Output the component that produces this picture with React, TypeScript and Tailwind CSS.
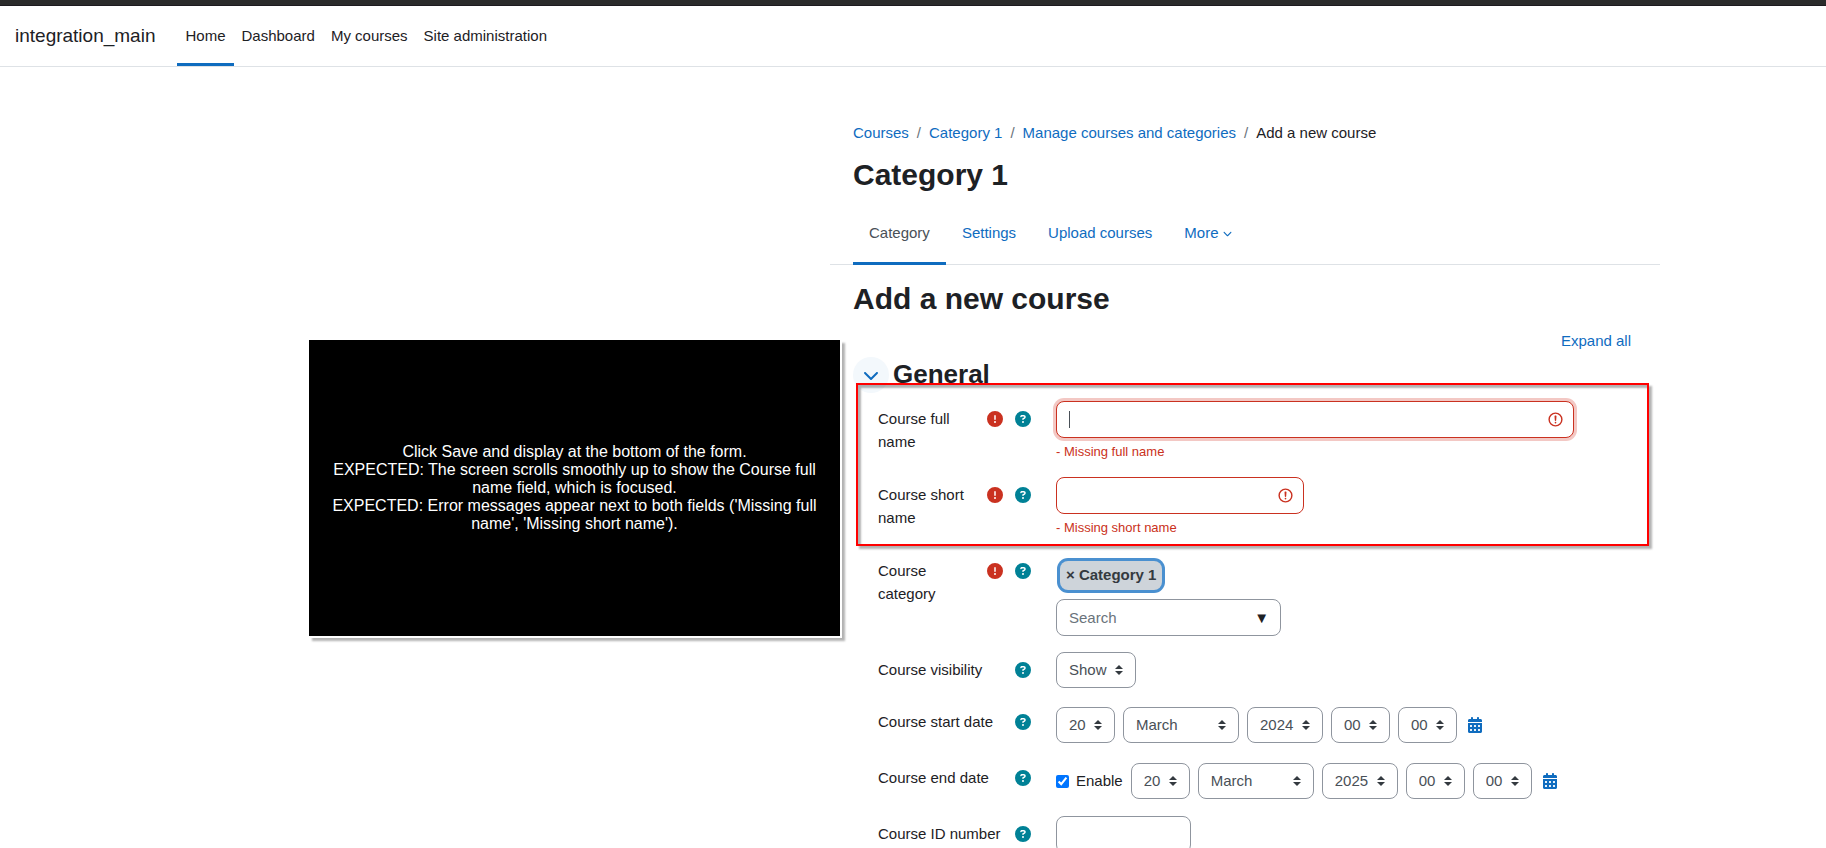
import React, { FC, ReactNode } from "react"
import { FaCalendarDays, FaChevronDown, FaCircleExclamation, FaCircleQuestion } from "react-icons/fa6"

const navItems = ["Home", "Dashboard", "My courses", "Site administration"]
const crumbs = ["Courses", "Category 1", "Manage courses and categories"]
const tabs = ["Category", "Settings", "Upload courses"]

const InvalidIcon = () => (
    <svg viewBox="0 0 12 12" fill="none" stroke="#ca3120" className="pointer-events-none absolute right-[10px] top-[10px] size-[17px]">
        <circle cx="6" cy="6" r="4.5" />
        <path strokeLinejoin="round" d="M5.8 3.6h.4L6 6.5z" />
        <circle cx="6" cy="8.2" r=".6" fill="#ca3120" stroke="none" />
    </svg>
)

interface RowProps {
    label: string
    htmlFor: string
    required?: boolean
    className?: string
    children: ReactNode
}

const Row: FC<RowProps> = ({ label, htmlFor, required, className, children }) => (
    <div className={`grid grid-cols-[153px_minmax(0,1fr)] gap-x-[25px] ${className || ""}`}>
        <div className="flex items-start justify-between pt-[6px]">
            <label htmlFor={htmlFor} className="leading-[23px]">{label}</label>
            <div className="flex h-[23px] shrink-0 items-center gap-3">
                {required && <FaCircleExclamation className="size-4 text-[#ca3120]" />}
                <button type="button" aria-label={`Help with ${label}`} className="text-[#008196]">
                    <FaCircleQuestion className="size-4" />
                </button>
            </div>
        </div>
        <div>{children}</div>
    </div>
)

interface SelectProps {
    id: string
    label?: string
    value: string
    width: string
}

const Select: FC<SelectProps> = ({ id, label, value, width }) => (
    <div className={`relative shrink-0 ${width}`}>
        <select
            id={id}
            aria-label={label}
            className="block h-9 w-full appearance-none rounded-lg border border-[#8f959e] bg-white pl-3 text-[15px] text-[#495057]"
        >
            <option>{value}</option>
        </select>
        <svg viewBox="0 0 4 5" fill="#343a40" className="pointer-events-none absolute right-[13px] top-[13px] h-[10px] w-2">
            <path d="M2 0L0 2h4zm0 5L0 3h4z" />
        </svg>
    </div>
)

const DateSelects: FC<{ id: string; year: string }> = ({ id, year }) => (
    <>
        <Select id={id} label="Day" value="20" width="w-[59px]" />
        <Select id={`${id}-month`} label="Month" value="March" width="w-[116px]" />
        <Select id={`${id}-year`} label="Year" value={year} width="w-[76px]" />
        <Select id={`${id}-hour`} label="Hour" value="00" width="w-[59px]" />
        <Select id={`${id}-minute`} label="Minute" value="00" width="w-[59px]" />
        <button type="button" aria-label="Calendar" className="ml-[3px] text-[#0f6cbf]">
            <FaCalendarDays className="h-4 w-[14px]" />
        </button>
    </>
)

const Header = () => (
    <header>
        <div className="h-[6px] border-b border-[#1d1a1f] bg-[#2b2b2b]" />
        <nav className="flex h-[61px] border-b border-[#dee2e6] pl-[15px]">
            <a href="#" className="mr-[22px] flex items-center text-[19px]">integration_main</a>
            {navItems.map((item) => (
                <a
                    key={item}
                    href="#"
                    className={`flex items-center border-y-[3px] border-t-transparent px-2 ${item === "Home" ? "border-b-[#0f6cbf]" : "border-b-transparent"}`}
                >
                    {item}
                </a>
            ))}
        </nav>
    </header>
)

const Note = () => (
    <aside className="-mr-[12px] ml-auto mt-[273px] flex h-[298px] w-[533px] items-center justify-center self-start border-b-2 border-r-2 border-white bg-black px-4 text-center text-base leading-[18px] text-white shadow-[3px_3px_2px_rgba(0,0,0,0.3)]">
        <p>
            Click Save and display at the bottom of the form.<br />
            EXPECTED: The screen scrolls smoothly up to show the Course full name field, which is focused.<br />
            EXPECTED: Error messages appear next to both fields ('Missing full name', 'Missing short name').
        </p>
    </aside>
)

const CourseForm = () => (
    <form className="px-[23px]">
        <h2 className="mt-[16px] text-[30px] font-bold leading-9">Add a new course</h2>
        <div className="mt-3 flex justify-end pr-[6px]">
            <a href="#" className="leading-[23px] text-[#0f6cbf]">Expand all</a>
        </div>
        <div className="mt-[5px] flex h-9 items-center gap-1">
            <button type="button" aria-label="Collapse General" className="flex size-9 items-center justify-center rounded-full bg-[#f3f8fc] text-[#0f6cbf]">
                <FaChevronDown className="size-4" />
            </button>
            <h3 className="pb-[2px] text-[26px] font-bold leading-8">General</h3>
        </div>

        <div className="relative -mt-[10px] ml-[3px] mr-[-12px] h-[163px] border-2 border-[#ff0000] pl-5 pt-4 shadow-[3px_3px_2px_rgba(0,0,0,0.3),inset_3px_3px_2px_rgba(0,0,0,0.3)]">
            <Row label="Course full name" htmlFor="fullname" required className="h-[76px]">
                <div className="relative w-[518px]">
                    <input id="fullname" type="text" className="block h-[37px] w-full rounded-lg border border-[#ca3120] bg-white px-3 text-[#495057] outline-none ring-3 ring-[#f3c8c4]" />
                    <span className="absolute left-[13px] top-[10px] h-[17px] w-px bg-[#495057]" />
                    <InvalidIcon />
                </div>
                <p className="mt-1 text-[13px] leading-5 text-[#ca3120]">- Missing full name</p>
            </Row>
            <Row label="Course short name" htmlFor="shortname" required>
                <div className="relative w-[248px]">
                    <input id="shortname" type="text" className="block h-[37px] w-full rounded-lg border border-[#ca3120] bg-white px-3 text-[#495057] outline-none" />
                    <InvalidIcon />
                </div>
                <p className="mt-1 text-[13px] leading-5 text-[#ca3120]">- Missing short name</p>
            </Row>
        </div>

        <div className="flex flex-col gap-4 pl-[25px] pt-[7px]">
            <Row label="Course category" htmlFor="category" required>
                <button type="button" className="ml-1 mt-2 block h-[29px] rounded-lg bg-[#ced4da] px-[6px] font-bold text-[#343a40] ring-3 ring-[#4a90d0]">
                    × Category 1
                </button>
                <div className="relative mt-[9px] w-[225px]">
                    <input id="category" type="text" placeholder="Search" className="block h-[37px] w-full rounded-lg border border-[#8f959e] bg-white px-3 placeholder:text-[#6a737b]" />
                    <span className="absolute right-3 top-[7px] leading-[23px]">▼</span>
                </div>
            </Row>
            <Row label="Course visibility" htmlFor="visibility">
                <Select id="visibility" value="Show" width="w-[80px]" />
            </Row>
            <Row label="Course start date" htmlFor="startdate">
                <div className="flex items-center gap-2 pb-px pt-[3px]">
                    <DateSelects id="startdate" year="2024" />
                </div>
            </Row>
            <Row label="Course end date" htmlFor="enddate">
                <div className="flex items-center gap-2 pb-px pt-[3px]">
                    <label className="flex items-center gap-[7px]">
                        <input type="checkbox" defaultChecked className="size-[13px]" />
                        Enable
                    </label>
                    <DateSelects id="enddate" year="2025" />
                </div>
            </Row>
            <Row label="Course ID number" htmlFor="idnumber">
                <input id="idnumber" type="text" className="block h-[37px] w-[135px] rounded-lg border border-[#8f959e] bg-white px-3" />
            </Row>
        </div>
    </form>
)

const App: FC = () => {
    return (
        <div className="min-h-screen bg-white font-['Liberation_Sans',Arial,sans-serif] text-[15px] text-[#1d2125]">
            <Header />
            <div className="grid grid-cols-[minmax(0,1fr)_830px] pr-[166px]">
                <Note />
                <main>
                    <div className="px-[23px] pt-[54px]">
                        <nav aria-label="Breadcrumb" className="flex leading-[23px]">
                            {crumbs.map((crumb) => (
                                <span key={crumb} className="flex">
                                    <a href="#" className="text-[#0f6cbf]">{crumb}</a>
                                    <span className="px-2 text-[#6a737b]">/</span>
                                </span>
                            ))}
                            <span>Add a new course</span>
                        </nav>
                        <h1 className="mt-[13px] text-[30px] font-bold leading-9">Category 1</h1>
                    </div>
                    <div className="mt-[9px] flex h-[63px] border-b border-[#dee2e6] px-[23px]">
                        {tabs.map((tab) => (
                            <a
                                key={tab}
                                href="#"
                                className={`-mb-px flex items-center border-y-[3px] border-t-transparent px-4 ${tab === "Category" ? "border-b-[#0f6cbf] text-[#495057]" : "border-b-transparent text-[#0f6cbf]"}`}
                            >
                                {tab}
                            </a>
                        ))}
                        <button type="button" className="flex items-center gap-1 px-4 text-[#0f6cbf]">
                            More
                            <FaChevronDown className="size-[9px]" />
                        </button>
                    </div>
                    <CourseForm />
                </main>
            </div>
        </div>
    )
}

export default App
